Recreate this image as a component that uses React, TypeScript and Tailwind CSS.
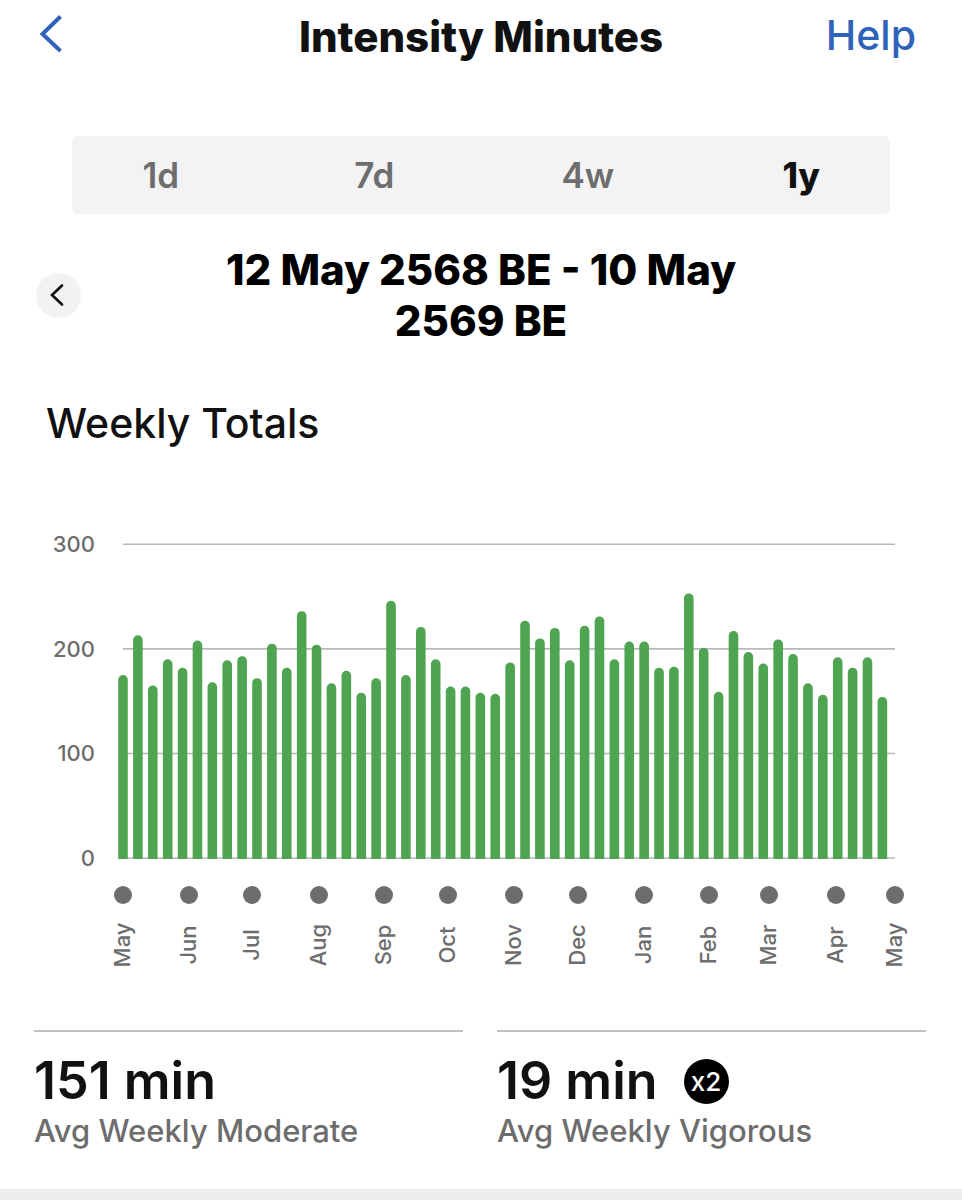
// App.tsx
import React, { useState } from "react";

type Month = {
  label: string;
  x: number;
};

type Stat = {
  value: string;
  label: string;
  badge?: string;
};

const ranges = ["1d", "7d", "4w", "1y"];

// minutes per week, oldest first
const weeks = [
  175, 213, 165, 190, 182, 208, 168, 189, 193, 172, 205, 182, 236, 204, 167,
  179, 158, 172, 246, 175, 221, 190, 164, 164, 158, 157, 187, 227, 210, 220,
  189, 222, 231, 190, 207, 207, 182, 183, 253, 201, 159, 217, 197, 186, 209,
  195, 167, 156, 192, 182, 192, 154,
];

const months: Month[] = [
  { label: "May", x: 123 },
  { label: "Jun", x: 189 },
  { label: "Jul", x: 252 },
  { label: "Aug", x: 319 },
  { label: "Sep", x: 384 },
  { label: "Oct", x: 448 },
  { label: "Nov", x: 514 },
  { label: "Dec", x: 578 },
  { label: "Jan", x: 644 },
  { label: "Feb", x: 709 },
  { label: "Mar", x: 769 },
  { label: "Apr", x: 836 },
  { label: "May", x: 895 },
];

const stats: Stat[] = [
  { value: "151 min", label: "Avg Weekly Moderate" },
  { value: "19 min", label: "Avg Weekly Vigorous", badge: "x2" },
];

const BASE_Y = 338;
const SCALE = 1.0457;
const STEP = 14.89;
const BAR = 9.6;

const yFor = (minutes: number) => BASE_Y - minutes * SCALE;

// rounded top, square bottom
const barPath = (minutes: number, i: number) => {
  const left = 123 + i * STEP - BAR / 2;
  const r = BAR / 2;
  return `M${left} ${BASE_Y + 1}V${yFor(minutes) + r}a${r} ${r} 0 0 1 ${BAR} 0V${BASE_Y + 1}z`;
};

const Header: React.FC = () => (
  <header className="grid h-[74px] grid-cols-[1fr_auto_1fr] items-center px-[38px]">
    <button type="button" aria-label="Back" className="mb-2 justify-self-start">
      <svg className="h-10 w-7" viewBox="0 0 28 40" fill="none">
        <path
          d="M22.5 3.5L4.5 21L22.5 38"
          stroke="#2f62b9"
          strokeWidth="4"
        />
      </svg>
    </button>
    <h1 className="text-[42px] leading-[50px] font-extrabold">
      Intensity Minutes
    </h1>
    <a
      href="#"
      className="mr-2 mb-1 justify-self-end text-[41px] leading-[50px] font-medium text-[#2f62b9]"
    >
      Help
    </a>
  </header>
);

const RangeTabs: React.FC = () => {
  const [active, setActive] = useState("1y");
  return (
    <div className="mx-[72px] mt-[62px] grid h-[78px] grid-cols-4 gap-9 rounded-md bg-[#f3f3f3]">
      {ranges.map((range) => (
        <button
          key={range}
          type="button"
          onClick={() => setActive(range)}
          className={`text-[35px] ${
            range === active ? "font-extrabold" : "font-semibold text-[#6d6d6d]"
          }`}
        >
          {range}
        </button>
      ))}
    </div>
  );
};

const DateRange: React.FC = () => (
  <div className="mt-[30px] flex items-center px-9">
    <button
      type="button"
      aria-label="Previous year"
      className="flex size-[45px] shrink-0 items-center justify-center rounded-full bg-[#f2f2f2] pr-1"
    >
      <svg className="h-6 w-4" viewBox="0 0 16 24" fill="none">
        <path
          d="M13 2.5L3 12L13 21.5"
          stroke="#111111"
          strokeWidth="2.6"
          strokeLinecap="round"
        />
      </svg>
    </button>
    <h2 className="mx-auto max-w-[600px] text-center text-[42px] leading-[51px] font-extrabold text-black">
      12 May 2568 BE - 10 May 2569 BE
    </h2>
    <div className="w-[45px] shrink-0" />
  </div>
);

const WeeklyChart: React.FC = () => (
  <svg
    className="mt-[72px] w-full"
    viewBox="0 0 962 460"
    role="img"
    aria-label="Weekly intensity minutes"
    fill="#6d6d6d"
  >
    {[300, 200, 100, 0].map((tick) => (
      <g key={tick}>
        <path d={`M123 ${yFor(tick)}H895`} stroke="#b9b9b9" strokeWidth="1.6" />
        <text
          x="95"
          y={yFor(tick) + 8}
          textAnchor="end"
          className="text-[22px] font-medium"
        >
          {tick}
        </text>
      </g>
    ))}
    {weeks.map((minutes, i) => (
      <path key={i} d={barPath(minutes, i)} fill="#4ea450" />
    ))}
    {months.map((month) => (
      <g key={month.x}>
        <circle cx={month.x} cy="375" r="9" />
        <text
          transform={`translate(${month.x + 7} 425) rotate(-90)`}
          textAnchor="middle"
          className="text-[22px] font-medium"
        >
          {month.label}
        </text>
      </g>
    ))}
  </svg>
);

const StatCard: React.FC<Stat> = ({ value, label, badge }) => (
  <div className="border-t-2 border-[#c0c0c0] pt-[17px]">
    <div className="flex items-center gap-[26px]">
      <span className="text-[52px] leading-[64px] font-semibold">{value}</span>
      {badge && (
        <span className="flex size-[45px] items-center justify-center rounded-full bg-black text-[26px] font-medium text-white">
          {badge}
        </span>
      )}
    </div>
    <p className="text-[31px] leading-9 font-medium text-[#6d6d6d]">{label}</p>
  </div>
);

export default function App() {
  return (
    <div className="bg-white font-['Inter',sans-serif] text-[#111111]">
      <Header />
      <RangeTabs />
      <DateRange />
      <h3 className="mt-[52px] px-[46px] text-[41px] leading-[50px] font-medium">
        Weekly Totals
      </h3>
      <WeeklyChart />
      <div className="mt-[50px] grid grid-cols-2 gap-[34px] pr-9 pb-10 pl-[34px]">
        {stats.map((stat) => (
          <StatCard key={stat.label} {...stat} />
        ))}
      </div>
      <div className="h-[11px] bg-[#eeeeee]" />
    </div>
  );
}
